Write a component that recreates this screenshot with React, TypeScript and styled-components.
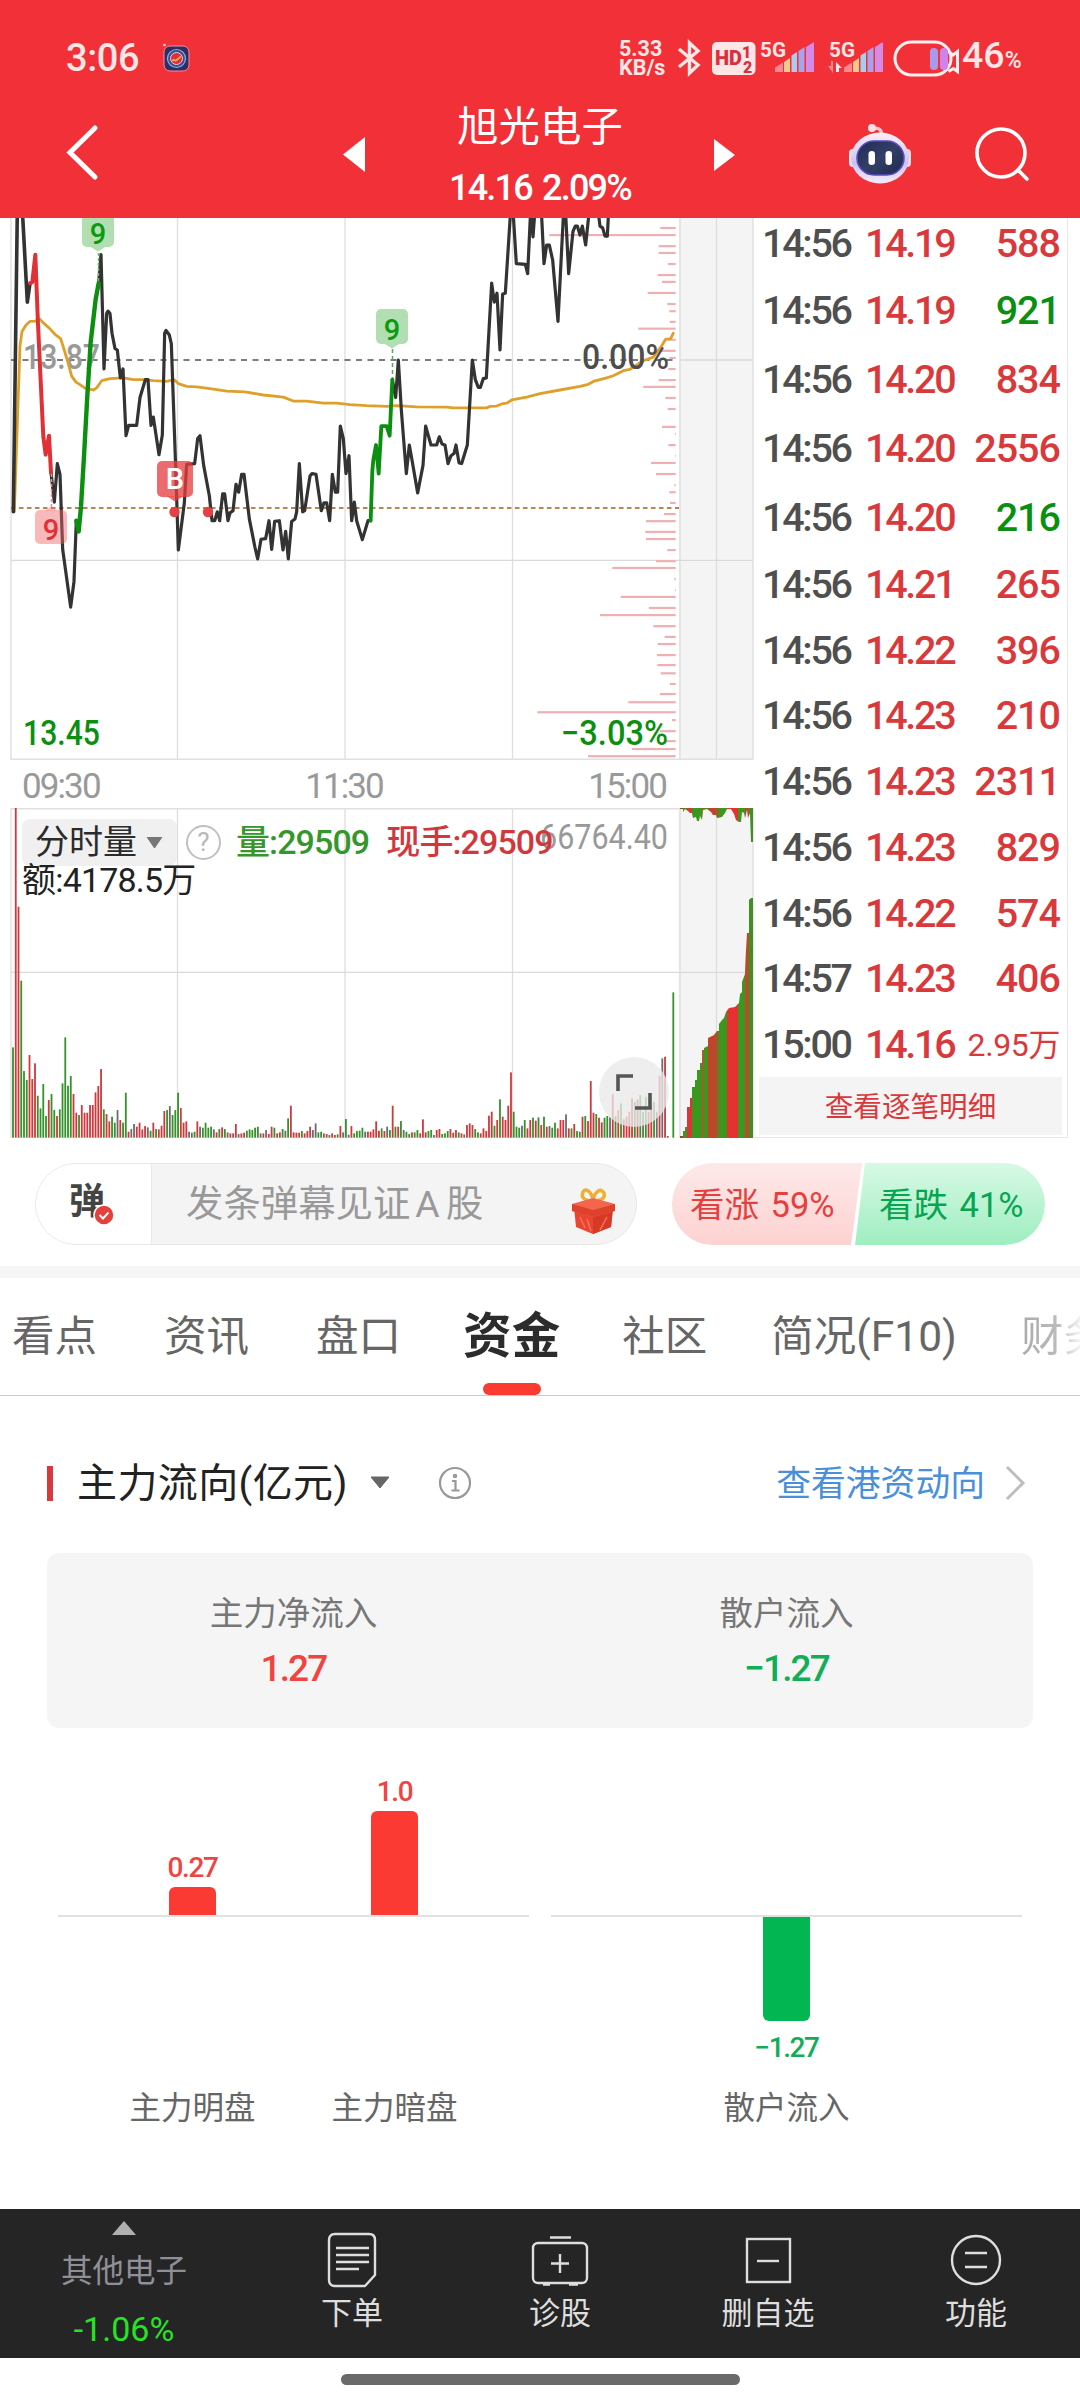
import React from 'react';
import styled, { createGlobalStyle } from 'styled-components';

const GlobalStyle = createGlobalStyle`
  * { box-sizing: border-box; }
  body {
    margin: 0;
    background: #fff;
    font-family: Roboto, "Noto Sans CJK SC", sans-serif;
    -webkit-font-smoothing: antialiased;
  }
  svg { display: block; flex: none; }
`;

const RED = '#d9393b';
const GREEN = '#0b8f10';

/* ---------- data ---------- */

type Tick = { time: string; price: string; vol: string; down?: boolean };

const TICKS: Tick[] = [
  { time: '14:56', price: '14.19', vol: '588' },
  { time: '14:56', price: '14.19', vol: '921', down: true },
  { time: '14:56', price: '14.20', vol: '834' },
  { time: '14:56', price: '14.20', vol: '2556' },
  { time: '14:56', price: '14.20', vol: '216', down: true },
  { time: '14:56', price: '14.21', vol: '265' },
  { time: '14:56', price: '14.22', vol: '396' },
  { time: '14:56', price: '14.23', vol: '210' },
  { time: '14:56', price: '14.23', vol: '2311' },
  { time: '14:56', price: '14.23', vol: '829' },
  { time: '14:56', price: '14.22', vol: '574' },
  { time: '14:57', price: '14.23', vol: '406' },
  { time: '15:00', price: '14.16', vol: '2.95万' },
];

/* Price series, in chart units: 3 per pixel across, 2.8 per pixel down. */
const PRICE_SEGMENTS: { color: string; width: number; points: string }[] = [
  { color: '#333', width: 3.6, points: '40,845 52,0 67,0 82,258 90,205' },
  {
    color: '#333', width: 3.2,
    points: '153,735 163,818 172,710 180,740 188,950 212,1112 222,1040 229,870',
  },
  {
    color: '#333', width: 3.2,
    points:
      '296,205 303,125 312,445 320,290 324,283 330,290 336,345 345,388 352,392 361,470 369,445 378,632 386,603 410,603 420,525 436,475 444,475 453,603 460,580 477,685 487,630 494,345 498,337 508,350 514,375 527,720 535,952 553,820 560,712 584,710 593,640 600,632 611,715 628,800 636,870 644,870 652,845 659,870 668,795 674,795 684,870 690,848 699,842 708,768 716,790 725,740 732,740 748,865 765,945 773,977 783,922 797,920 807,870 815,950 824,872 838,870 849,952 857,900 865,977 875,872 885,865 890,845 898,710 908,845 914,842 930,745 936,738 948,740 964,842 972,820 980,820 989,870 997,740 1006,790 1013,790 1021,605 1030,640 1038,738 1047,688 1055,870 1063,818 1070,870 1087,923 1104,870 1112,870',
  },
  {
    color: '#333', width: 3.2,
    points:
      '1177,475 1187,525 1195,420 1204,560 1219,738 1228,658 1236,700 1253,792 1269,715 1277,605 1293,658 1310,658 1318,635 1326,655 1335,658 1344,710 1353,688 1362,682 1368,658 1377,708 1385,710 1402,658 1417,420 1426,475 1435,497 1441,497 1450,472 1459,470 1475,205 1483,258 1491,233 1500,392 1508,235 1516,233 1532,0 1539,0 1549,150 1576,152 1583,178 1592,0 1595,0 1599,75 1605,0 1624,0 1632,150 1640,98 1648,98 1658,140 1674,312 1691,0 1697,10 1706,178 1719,60 1726,45 1732,45 1740,70 1747,45 1757,98 1768,0 1794,0 1800,45 1808,50 1815,73 1822,73 1826,0',
  },
  {
    color: '#e03236', width: 4,
    points: '90,205 97,202 106,125 114,320 130,635 137,685 147,632 153,735',
  },
  {
    color: '#0b8f10', width: 4.4,
    points: '229,870 236,900 243,830 252,690 262,520 272,370 287,250 296,205',
  },
  {
    color: '#0b8f10', width: 3.8,
    points: '1112,870 1117,730 1120,700 1128,658 1136,738 1144,605 1160,605 1169,632 1177,475',
  },
];

const AVERAGE =
  '43,845 52,600 60,380 66,340 78,322 90,312 105,311 120,306 130,316 147,330 165,348 182,360 192,390 205,430 215,465 228,482 240,489 257,500 280,504 290,498 305,478 330,472 370,470 400,475 430,475 460,478 500,480 522,475 535,486 560,494 590,495 630,500 680,507 735,509 790,518 850,524 880,535 920,535 970,541 1010,541 1050,545 1100,548 1160,550 1190,548 1250,551 1340,552 1360,554 1460,554 1470,550 1490,549 1505,543 1520,541 1535,532 1580,524 1620,514 1680,504 1740,494 1765,488 1780,480 1820,470 1840,464 1870,450 1890,446 1930,422 1960,412 1985,380 1997,362 2012,360 2020,345';

/* Volume by price: [y, left end] in chart units. */
const PROFILE: [number, number][] = (
  '50,961 70,628 101,956 120,956 151,984 182,953 201,966 232,923 263,982 283,988 313,989 332,895 363,985 394,960 414,988 445,985 476,956 495,910 526,976 557,983 607,966 627,1005 658,985 688,1005 708,933 739,948 770,1003 790,988 820,990 851,972 871,918 901,916 921,918 952,982 983,948 1002,817 1033,1003 1064,1005 1083,842 1114,927 1134,780 1165,940 1195,974 1215,953 1246,951 1274,952 1297,962 1327,990 1355,960 1378,865 1406,592 1428,996 1459,960 1487,975 1509,876 1529,744'
)
  .split(' ')
  .map((p) => p.split(',').map(Number) as [number, number]);

/* Minute volumes: height in thirds of a pixel, then r(ise), g(fall) or n(eutral). */
const VOLUMES = (
  '271g 993r 693r 471g 200g 173g 248r 176r 223r 126g 88g 161g 65g 113r 131g 83g 65r 85g 163g 301g 156g 185g 131r 75r 68g 98r 75r 75r 98r 98r 136r 155r 206r 85g 71r 49r 63g 45g 83n 53r 45g 135g 18r 26n 41n 33r 45r 25r 35r 31n 21g 45r 26g 25r 36r 80r 83g 95n 68g 83g 135g 89r 45r 49r 18n 15n 18g 49r 33n 30g 45g 30g 33g 25n 16r 26g 31r 26g 16n 13r 13r 41r 11n 13r 15r 21g 25g 23g 30g 33g 13n 13r 23n 11r 33r 30g 13r 16r 26g 21n 58g 96r 16r 15r 15r 20g 13r 20r 33r 23n 43n 16g 18g 13n 11r 8g 13r 8r 10g 35r 16n 56g 9n 35r 13g 20g 21g 30g 18n 18r 18r 25r 49r 21r 28g 20r 33n 23g 96r 33g 33r 50g 23n 18g 11g 16r 16g 23g 13r 55r 16r 20g 23g 8n 23r 26r 11g 13g 20g 26r 15r 23r 16g 13r 10n 38r 43r 38r 26g 16g 13r 28r 20r 66r 78r 36g 53r 115g 63r 53r 96r 196r 78g 33g 30g 36n 53g 28r 53r 60g 51r 61g 38r 63g 33r 35n 30g 45g 28r 53r 53r 70n 28r 28g 41r 20g 18g 63r 65g 50r 170r 75r 71g 60r 46r 60g 65g 61n 131r 65g 83r 103g 55r 63r 78r 118r 108g 115r 128g 78n 123g 78r 103r 108g 78n 185r 238n 243r 5r 0n 436g'
)
  .split(' ')
  .map((v) => ({ h: parseInt(v, 10) / 3, kind: v.slice(-1) }));

const VOLUME_COLORS: Record<string, string> = { r: '#d0383c', g: '#35922b', n: '#6d6a70' };

/* ---------- shared ---------- */

const Screen = styled.div`
  width: 1080px;
  height: 2400px;
  display: flex;
  flex-direction: column;
  background: #fff;
  overflow: hidden;
`;

/* ---------- header ---------- */

const Header = styled.header`
  height: 218px;
  flex: none;
  background: #f13037;
  color: #fff;
  display: flex;
  flex-direction: column;
`;

const StatusBar = styled.div`
  height: 96px;
  padding: 20px 57px 0 66px;
  display: flex;
  align-items: center;
  color: #ffe6e6;
`;

const Clock = styled.span`
  font-size: 38px;
  font-weight: 500;
  line-height: 76px;
  width: 97px;
  letter-spacing: -0.4px;
`;

const NetSpeed = styled.span`
  margin-left: auto;
  width: 58px;
  font-size: 21.5px;
  line-height: 19px;
  font-weight: 700;
  white-space: pre;
`;

const Battery = styled.span`
  display: flex;
  align-items: baseline;
  width: 61px;
  margin-left: 2px;
  font-size: 37.5px;
  line-height: 76px;
  font-weight: 500;
  white-space: nowrap;
`;

const Percent = styled.small`
  font-size: 23px;
  font-weight: 500;
`;

const StatusGap = styled.i`
  width: ${(p: { $w: number }) => p.$w}px;
`;

const NavBar = styled.div`
  flex: 1;
  display: grid;
  grid-template-columns: 343px 394px 343px;
  align-items: center;
`;

const NavSide = styled.div<{ $end?: boolean }>`
  display: flex;
  align-items: center;
  padding: ${(p) => (p.$end ? '0 49px 6px 0' : '0 0 8px 64px')};
  justify-content: ${(p) => (p.$end ? 'flex-end' : 'flex-start')};
  gap: 61px;
`;

const StockSwitch = styled.div`
  display: flex;
  align-items: center;
  justify-content: space-between;
`;

const SwitchArrow = styled.svg`
  margin-bottom: 4px;
`;

const StockTitle = styled.div`
  display: flex;
  flex-direction: column;
  align-items: center;
`;

const StockName = styled.div`
  font-size: 41.4px;
  line-height: 62px;
`;

const StockQuote = styled.div`
  font-size: 36px;
  line-height: 60px;
  font-weight: 500;
  letter-spacing: -1.8px;
  word-spacing: 3px;
`;

/* ---------- market ---------- */

const Market = styled.section`
  display: flex;
  height: 920px;
  flex: none;
`;

const ChartPane = styled.div`
  width: 754px;
  display: flex;
  flex-direction: column;
`;

const TimeAxis = styled.div`
  height: 48px;
  padding: 4px 88px 0 22px;
  display: flex;
  justify-content: space-between;
  font-size: 35px;
  line-height: 46px;
  letter-spacing: -1.9px;
  color: #999;
`;

const VolumePane = styled.div`
  position: relative;
  height: 330px;
`;

const Legend = styled.div`
  position: absolute;
  left: 22px;
  top: 11px;
  display: flex;
  flex-wrap: wrap;
  align-items: center;
  width: 640px;
`;

const StudyPicker = styled.button`
  width: 155px;
  height: 47px;
  border: 0;
  border-radius: 8px;
  background: #f0f0f0;
  padding: 0 0 0 13px;
  display: flex;
  align-items: center;
  gap: 9px;
  font: 400 34px/47px Roboto, "Noto Sans CJK SC", sans-serif;
  color: #2b2b2b;
`;

const HelpDot = styled.span`
  width: 35px;
  height: 35px;
  margin: 0 15px 0 9px;
  border: 2.5px solid #c0c0c0;
  border-radius: 50%;
  color: #b8b8b8;
  font-size: 26px;
  line-height: 31px;
  text-align: center;
`;

const LegendItem = styled.span<{ $color: string; $gap?: number }>`
  color: ${(p) => p.$color};
  margin-right: ${(p) => p.$gap ?? 0}px;
  font-size: 34px;
  line-height: 47px;
  letter-spacing: -0.9px;
  font-weight: 500;
`;

const Turnover = styled.div`
  flex-basis: 100%;
  font-size: 34px;
  line-height: 28px;
  letter-spacing: -0.8px;
  color: #222;
`;

const TickPane = styled.div`
  width: 314px;
  border-right: 1px solid #e8e8e8;
  border-bottom: 1px solid #e8e8e8;
  display: flex;
  flex-direction: column;
  padding: 0 5px 2px;
`;

const TickRow = styled.div<{ $tall?: boolean }>`
  height: ${(p) => (p.$tall ? 69 : 66)}px;
  display: grid;
  grid-template-columns: 103px 96px 1fr;
  align-items: center;
  padding: 2px 2px 0 3px;
  font-size: 39.5px;
  font-weight: 500;
  line-height: 48px;
  white-space: nowrap;

  &:first-child { height: 58px; padding-bottom: 12px; }
`;

const TickCell = styled.span<{ $color: string }>`
  color: ${(p) => p.$color};
  letter-spacing: -2.3px;
`;

const TickVolume = styled.span<{ $color: string; $small?: boolean }>`
  color: ${(p) => p.$color};
  letter-spacing: ${(p) => (p.$small ? -0.4 : -1)}px;
  font-size: ${(p) => (p.$small ? 32 : 39.5)}px;
  font-weight: ${(p) => (p.$small ? 400 : 500)};
  text-align: right;
`;

const TickMore = styled.button`
  margin-top: auto;
  height: 58px;
  border: 0;
  background: #f4f4f4;
  color: ${RED};
  font: 400 28.6px/58px Roboto, "Noto Sans CJK SC", sans-serif;
`;

/* ---------- bullet comments ---------- */

const BulletRow = styled.section`
  height: 128px;
  flex: none;
  padding: 25px 35px 0;
  display: flex;
  justify-content: space-between;
`;

const BulletInput = styled.div`
  width: 602px;
  height: 82px;
  border-radius: 41px;
  border: 1px solid #e9e9e9;
  background: #f4f4f4;
  display: flex;
  align-items: center;
  overflow: hidden;
`;

const BulletToggle = styled.div`
  width: 116px;
  height: 100%;
  border-right: 1px solid #e9e9e9;
  background: #fff;
  padding-left: 33px;
  font-size: 36px;
  line-height: 76px;
  font-weight: 700;
  color: #444;
  position: relative;
`;

const ToggleBadge = styled.svg`
  position: absolute;
  left: 57px;
  top: 40px;
`;

const BulletHint = styled.span`
  margin: 0 auto 0 34px;
  font-size: 37.4px;
  line-height: 80px;
  word-spacing: -3px;
  color: #999;
`;

const HintLatin = styled.span`
  margin-left: 5px;
`;

const GiftIcon = styled.svg`
  margin: 14px 20px 0 0;
`;

const Votes = styled.div`
  width: 373px;
  height: 82px;
  border-radius: 41px;
  overflow: hidden;
  display: flex;
`;

const Vote = styled.div<{ $up?: boolean }>`
  width: ${(p) => (p.$up ? 190 : 195)}px;
  margin-left: ${(p) => (p.$up ? 0 : -12)}px;
  flex: none;
  clip-path: ${(p) =>
    p.$up
      ? 'polygon(0 0, 100% 0, calc(100% - 11px) 100%, 0 100%)'
      : 'polygon(15px 0, 100% 0, 100% 100%, 5px 100%)'};
  background: ${(p) =>
    p.$up
      ? 'linear-gradient(#fde9e9, #fdd2d1)'
      : 'linear-gradient(#d8f9e5, #9eeec0)'};
  color: ${(p) => (p.$up ? '#e5403d' : '#07a552')};
  padding-left: ${(p) => (p.$up ? 18 : 29)}px;
  font-size: 34.5px;
  line-height: 84px;
  white-space: nowrap;
  word-spacing: 3px;
`;

const Divider = styled.div`
  height: 12px;
  flex: none;
  background: #f5f5f5;
`;

/* ---------- tabs ---------- */

const Tabs = styled.nav`
  height: 118px;
  flex: none;
  border-bottom: 1.5px solid #cbcbcb;
  padding-left: 12px;
  display: flex;
  gap: 67px;
  overflow: hidden;
  white-space: nowrap;
`;

const Tab = styled.a<{ $active?: boolean; $fade?: boolean }>`
  position: relative;
  flex: none;
  font-size: ${(p) => (p.$active ? 48.6 : 42.5)}px;
  font-weight: ${(p) => (p.$active ? 700 : 400)};
  line-height: 118px;
  margin: 0 ${(p) => (p.$active ? -5 : 0)}px;
  color: ${(p) => (p.$active ? '#2c2c2c' : '#666')};
  ${(p) =>
    p.$fade &&
    `background: linear-gradient(90deg, #aaa 0, #bbb 36px, #fff 64px);
     background-clip: text; -webkit-background-clip: text; color: transparent;`}

  &:nth-child(n + 6) { margin-left: -3px; }

  &::after {
    content: '';
    display: ${(p) => (p.$active ? 'block' : 'none')};
    position: absolute;
    left: calc(50% - 29px);
    bottom: 0;
    width: 58px;
    height: 12px;
    border-radius: 6px;
    background: #fb3b31;
  }
`;

/* ---------- capital flow ---------- */

const FlowSection = styled.section`
  flex: 1;
  display: flex;
  flex-direction: column;
  padding: 52px 47px 0;
`;

const FlowHead = styled.div`
  height: 70px;
  display: flex;
  align-items: center;
`;

const FlowMark = styled.i`
  width: 6px;
  height: 35px;
  background: #d9393b;
  margin-right: 24px;
`;

const FlowTitle = styled.h2`
  margin: 0 21px 0 0;
  font-size: 40px;
  font-weight: 400;
  line-height: 70px;
  letter-spacing: 0.4px;
  padding-top: 1px;
  color: #222;
`;

const FlowLink = styled.a`
  margin-left: auto;
  margin-right: 20px;
  padding-top: 1px;
  font-size: 34.8px;
  line-height: 70px;
  color: #4a8fd9;
`;

const SummaryCard = styled.div`
  margin-top: 35px;
  height: 175px;
  border-radius: 12px;
  background: #f5f5f5;
  display: grid;
  grid-template-columns: 1fr 1fr;
  padding: 36px 0 0;
`;

const SummaryItem = styled.div`
  display: flex;
  flex-direction: column;
  align-items: center;
`;

const SummaryLabel = styled.span`
  font-size: 33.5px;
  line-height: 50px;
  color: #777;
`;

const FlowValue = styled.span<{ $down?: boolean; $size: number; $line: number }>`
  font-size: ${(p) => p.$size}px;
  line-height: ${(p) => p.$line}px;
  font-weight: 500;
  letter-spacing: -0.05em;
  color: ${(p) => (p.$down ? '#12ae57' : '#ef443f')};
`;

const FlowCharts = styled.div`
  margin: 34px 11px 0;
  display: grid;
  grid-template-columns: 471px 471px;
  justify-content: space-between;
`;

const FlowChart = styled.div`
  display: flex;
  justify-content: center;
  gap: 2px;
  height: 380px;
  background: linear-gradient(#e0e2e2, #e0e2e2) 0 153px / 100% 2px no-repeat;
`;

const FlowColumn = styled.div`
  width: 200px;
  display: grid;
  grid-template-rows: 153px 2px 147px 1fr;
  justify-items: center;
`;

const BarArea = styled.div<{ $below?: boolean }>`
  grid-row: ${(p) => (p.$below ? 3 : 1)};
  display: flex;
  flex-direction: ${(p) => (p.$below ? 'column-reverse' : 'column')};
  justify-content: flex-end;
  align-items: center;
`;

const Bar = styled.div<{ $down?: boolean }>`
  width: 47px;
  flex: none;
  border-radius: ${(p) => (p.$down ? '0 0 6px 6px' : '6px 6px 0 0')};
  background: ${(p) => (p.$down ? '#02b752' : '#fb3b33')};
`;

const ColumnLabel = styled.span`
  grid-row: 4;
  font-size: 31.5px;
  line-height: 90px;
  color: #666;
`;

/* ---------- bottom bar ---------- */

const ActionBar = styled.footer`
  height: 149px;
  flex: none;
  background: #252525;
  display: grid;
  grid-template-columns: 248px repeat(4, 208px);
`;

const SectorCell = styled.div`
  display: flex;
  flex-direction: column;
  align-items: center;
  padding-top: 12px;
`;

const SectorName = styled.span`
  margin-top: 12px;
  font-size: 31.5px;
  line-height: 50px;
  color: #8f8f98;
`;

const SectorChange = styled.span`
  margin-top: 7px;
  font-size: 34px;
  line-height: 50px;
  font-weight: 400;
  color: #26e327;
`;

const Action = styled.button`
  border: 0;
  background: none;
  padding: 21px 0 0;
  display: flex;
  flex-direction: column;
  align-items: center;
  font: 400 31px/46px Roboto, "Noto Sans CJK SC", sans-serif;
  color: #dedede;
  gap: 1px;
`;

const HomeArea = styled.div`
  height: 42px;
  flex: none;
  display: flex;
  justify-content: center;
  padding-top: 16px;
`;

const HomeIndicator = styled.i`
  width: 399px;
  height: 11px;
  border-radius: 6px;
  background: #6a6a6a;
`;

/* ---------- drawings ---------- */

function Signal({ traffic }: { traffic?: boolean }) {
  const colors = ['#ff8790', '#f5c98e', '#a8cdf0', '#a7a4ec', '#d58ae8'];
  return (
    <svg width="57" height="36" viewBox="0 0 57 36">
      <text x="1" y="17" fontSize="20.5" fontWeight="700" fill="#ffe6e6" textLength="26" lengthAdjust="spacingAndGlyphs">
        5G
      </text>
      {traffic && (
        <g fill="#ffe6e6">
          <path d="M3 21v5h-3l5 7v-12z" opacity=".5" />
          <path d="M8 32v-10l6 6h-3v4z" />
        </g>
      )}
      <path d="M16 32v-4.5l8-5V32z" fill={colors[0]} />
      <path d="M25 32V22l6-4v14z" fill={colors[1]} />
      <path d="M32.5 32V15.5l5.5-3.5v20z" fill={colors[2]} />
      <path d="M39.5 32V11l6-4v25z" fill={colors[3]} />
      <path d="M47 32V7l8-5v30z" fill={colors[4]} />
    </svg>
  );
}

function StatusIcons() {
  return (
    <>
      <svg width="25" height="38" viewBox="0 0 25 38" fill="none" stroke="#ffe6e6" strokeWidth="3.4">
        <path d="M2 10 21 26 12.5 34V4L21 12 2 28" strokeLinejoin="miter" />
      </svg>
      <svg width="57" height="38" viewBox="0 0 57 38">
        <rect x="10" y="3" width="43.5" height="33" rx="5" fill="#ffe6e6" />
        <text x="13" y="26" fontSize="20" fontWeight="900" fill="#d93040" textLength="27" lengthAdjust="spacingAndGlyphs">HD</text>
        <text x="40" y="19" fontSize="16" fontWeight="900" fill="#d93040">1</text>
        <text x="41" y="34" fontSize="16" fontWeight="900" fill="#d93040">2</text>
      </svg>
    </>
  );
}

function BatteryIcon() {
  return (
    <svg width="67" height="38" viewBox="0 0 67 38" fill="none">
      <rect x="2" y="3" width="56" height="33" rx="16.5" stroke="#fff0f0" strokeWidth="3" />
      <rect x="37" y="9" width="8" height="22" rx="4" fill="#a99bec" />
      <rect x="47" y="9" width="8" height="22" rx="4" fill="#cf83ea" />
      <path d="M56 13l4 3 4.500-3.500v20l-4-3-5 3" stroke="#fff0f0" strokeWidth="3" />
    </svg>
  );
}

function AppBadge() {
  return (
    <svg width="28" height="30" viewBox="0 0 28 30">
      <rect x="1" y="3" width="25" height="25" rx="6" fill="#332c60" stroke="#ec8fa5" strokeWidth="1" />
      <circle cx="13.5" cy="15.5" r="9" fill="#344c94" stroke="#8faee5" strokeWidth="1.2" />
      <circle cx="13.5" cy="15.5" r="6" fill="#d92f3e" stroke="#f4ccd6" strokeWidth="1" />
      <path d="M9 17l4 .5 5-4" stroke="#f4a740" strokeWidth="2" fill="none" />
      <circle cx="1.5" cy="2" r="1.3" fill="#ffd9dc" />
    </svg>
  );
}

function RobotIcon() {
  return (
    <svg width="64" height="62" viewBox="0 0 64 62">
      <defs>
        <linearGradient id="shell" x1="0" y1="0" x2="0" y2="1">
          <stop offset="0" stopColor="#fdeef6" />
          <stop offset=".6" stopColor="#c9c4f3" />
          <stop offset="1" stopColor="#f8eafa" />
        </linearGradient>
        <linearGradient id="visor" x1="0" y1="0" x2="1" y2="1">
          <stop offset="0" stopColor="#202b55" />
          <stop offset=".5" stopColor="#333f66" />
          <stop offset="1" stopColor="#1d2850" />
        </linearGradient>
      </defs>
      <path d="M24 5.5c6-1 9 0 10 6" stroke="#ffc6cd" strokeWidth="3.4" fill="none" />
      <circle cx="24" cy="5" r="4" fill="#ffe0e3" />
      <rect x="1" y="26" width="8" height="18" rx="4" fill="#ffe3ec" />
      <rect x="55" y="26" width="8" height="18" rx="4" fill="#ffd3e2" />
      <ellipse cx="32" cy="35" rx="29" ry="25.5" fill="url(#shell)" />
      <rect x="9" y="18" width="47" height="34" rx="17" fill="url(#visor)" stroke="#5b4bc4" strokeWidth="1.5" />
      <rect x="20.5" y="28" width="6.5" height="14" rx="3.2" fill="#fff" />
      <rect x="37.5" y="28" width="6.5" height="14" rx="3.2" fill="#fff" />
    </svg>
  );
}

function Gift() {
  return (
    <GiftIcon width="45" height="48" viewBox="0 0 45 48">
      <path d="M22 14C16 14 9 12 12 5c3-5 9 0 10 9 1-9 8-14 11-8 2 6-5 8-11 8z" fill="none" stroke="#f0ae35" strokeWidth="3.5" />
      <path d="M3 20h39l-2 20-18 7-17-7z" fill="#e9452f" />
      <path d="M22 25v22l18-7 2-18z" fill="#d63a26" />
      <path d="M1 17l21-6 22 6v7l-22 6-21-6z" fill="#f2674c" />
      <path d="M1 17l21 6 22-6v7l-22 6-21-6z" fill="#de422d" />
      <path d="M9 30l5 11M16 32l4 12M36 30l-7 13" stroke="#f2745c" strokeWidth="1.5" />
    </GiftIcon>
  );
}

type FlagProps = {
  cx: number;
  top: number;
  w: number;
  h: number;
  fill: string;
  ink: string;
  baseline: number;
  up?: boolean;
  label: string;
};

function Flag({ cx, top, w, h, fill, ink, baseline, up, label }: FlagProps) {
  const tip = up
    ? `M${cx - 6} ${top + 0.5}l6-4 6 4z`
    : `M${cx - 8} ${top + h - 0.5}l8 5 8-5z`;
  return (
    <g>
      <path d={tip} fill={fill} />
      <rect x={cx - w / 2} y={top} width={w} height={h} rx="5" fill={fill} />
      <text x={cx} y={baseline} fontSize="29" fontWeight="500" fill={ink} textAnchor="middle">
        {label}
      </text>
    </g>
  );
}

const GRID_X = [11, 177.5, 345, 512.5, 680, 716.5, 753];

function PriceChart() {
  return (
    <svg width="754" height="542" viewBox="0 218 754 542">
      <rect x="679" y="218" width="74" height="542" fill="#f4f4f4" />
      {GRID_X.map((x) => (
        <line key={x} x1={x} x2={x} y1="218" y2="760" stroke="#dedede" strokeWidth="1.3" />
      ))}
      <line x1="11" x2="753" y1="560.4" y2="560.4" stroke="#dadada" strokeWidth="1.3" />
      <line x1="11" x2="753" y1="759.3" y2="759.3" stroke="#e0e0e0" strokeWidth="1.5" />
      <line x1="680" x2="753" y1="360" y2="360" stroke="#dadada" strokeWidth="1.3" />
      <line x1="11" x2="676" y1="360" y2="360" stroke="#7c7c7c" strokeWidth="1.8" strokeDasharray="6 5.5" />
      <line x1="11" x2="679" y1="508" y2="508" stroke="#b8834f" strokeWidth="1.9" strokeDasharray="4.5 3.5" />
      {PROFILE.map(([y, left]) => (
        <rect key={y} x={340 + left / 3} width={(1007 - left) / 3} y={210 + y / 2.8 - 1} height="2.2" fill="#eeb0b2" />
      ))}
      <text x="23" y="369" fontSize="35" fontWeight="500" fill="#999" textLength="77" lengthAdjust="spacingAndGlyphs">13.87</text>
      <g transform="translate(0 210) scale(.33333 .35714)" fill="none" strokeLinejoin="round" strokeLinecap="round">
        <polyline points={AVERAGE} stroke="#dfa02a" strokeWidth="2.8" vectorEffect="non-scaling-stroke" />
        {PRICE_SEGMENTS.map((s) => (
          <polyline key={s.points} points={s.points} stroke={s.color} strokeWidth={s.width} vectorEffect="non-scaling-stroke" />
        ))}
      </g>
      <text x="582" y="369" fontSize="35" fontWeight="500" fill="#4d4d4d" textLength="87" lengthAdjust="spacingAndGlyphs">0.00%</text>
      <text x="23" y="745" fontSize="35" fontWeight="500" fill={GREEN} textLength="77" lengthAdjust="spacingAndGlyphs">13.45</text>
      <text x="561" y="745" fontSize="35" fontWeight="500" fill={GREEN} textLength="107" lengthAdjust="spacingAndGlyphs">−3.03%</text>
      <line x1="98.5" x2="98.5" y1="253" y2="282" stroke="#69b869" strokeWidth="1.5" strokeDasharray="3 2" />
      <line x1="392.5" x2="392.5" y1="349" y2="378" stroke="#55a855" strokeWidth="1.5" strokeDasharray="4 3" />
      <line x1="51.5" x2="51.5" y1="474" y2="507" stroke="#ec8f92" strokeWidth="1.5" strokeDasharray="3 2" />
      <Flag cx={98} top={213} w={32} h={34} fill="#b2dfb2" ink="#0b9a10" baseline={244} label="9" />
      <Flag cx={392} top={309} w={32} h={35} fill="#b2dfb2" ink="#0b9a10" baseline={340} label="9" />
      <Flag cx={51} top={510} w={32} h={34} fill="rgba(240,100,105,.45)" ink="#e03236" baseline={540} up label="9" />
      <Flag cx={175} top={461} w={36} h={36} fill="rgba(230,60,62,.76)" ink="#fff" baseline={489} label="B" />
      <circle cx="174.5" cy="512" r="5.2" fill="#e64043" />
      <circle cx="208" cy="512" r="5.2" fill="#e64043" />
    </svg>
  );
}

/* Call-auction silhouettes, clipped over coloured stripes. */
const AUCTION_BODY =
  '680,1138 680,1136 683,1136 683,1131 685,1131 685,1127 687,1127 687,1107 690,1107 690,1098 692,1098 692,1087 695,1087 695,1080 697,1080 697,1070 700,1070 700,1063 702,1063 702,1050 704,1050 704,1048 708,1046 708,1038 714,1035 717,1031 719,1031 719,1024 722,1020 724,1018 726,1012 729,1008 735,1007 739,1003 740,994 742,992 742,982 745,974 746,950 747,933 749,933 749,900 751,898 753,898 753,1138';
const AUCTION_TOP =
  '680,807 680,809 683,809 683,812 685,809 688,811 690,813 692,813 693,818 696,817 697,821 699,821 700,816 702,820 703,810 707,809 711,812 713,815 716,815 717,818 722,817 725,813 727,809 731,809 734,814 736,820 739,822 741,822 742,812 744,813 745,818 747,810 748,818 750,813 751,842 753,842 753,807';
const STRIPES: [number, number, string][] = [
  [680, 683, '#a3452a'], [683, 687, '#3f9423'], [687, 692, '#dc3535'], [692, 702, '#3b981f'],
  [702, 704, '#a65c2b'], [704, 708, '#3b981f'], [708, 716, '#c0462b'], [716, 719, '#8b6426'],
  [719, 727, '#3b981f'], [727, 738, '#e73131'], [738, 745, '#3b981f'], [745, 749, '#b94a2b'], [749, 753, '#3f8f22'],
];

function VolumeChart() {
  const step = 660.3 / (VOLUMES.length - 1);
  return (
    <svg width="754" height="330" viewBox="0 808 754 330">
      <defs>
        <clipPath id="auction">
          <polygon points={AUCTION_BODY} />
          <polygon points={AUCTION_TOP} />
        </clipPath>
      </defs>
      <rect x="678.5" y="808" width="74.5" height="330" fill="#f4f4f4" />
      {GRID_X.map((x) => (
        <line key={x} x1={x} x2={x} y1="808" y2="1138" stroke="#dedede" strokeWidth="1.3" />
      ))}
      <line x1="11" x2="753" y1="808.7" y2="808.7" stroke="#e0e0e0" strokeWidth="1.5" />
      <line x1="11" x2="753" y1="972.4" y2="972.4" stroke="#dadada" strokeWidth="1.3" />
      {VOLUMES.map((v, i) => (
        <rect key={i} x={12.1 + i * step} y={1137.7 - v.h} width="1.8" height={v.h} fill={VOLUME_COLORS[v.kind]} />
      ))}
      <g clipPath="url(#auction)">
        {STRIPES.map(([a, b, color]) => (
          <rect key={a} x={a} width={b - a + 0.3} y="807" height="332" fill={color} />
        ))}
      </g>
      <text x="540" y="849" fontSize="35" fontWeight="400" fill="#999" textLength="128" lengthAdjust="spacingAndGlyphs">66764.40</text>
      <circle cx="634" cy="1092" r="35" fill="#e9e9e9" fillOpacity=".78" />
      <path d="M618 1091v-15h15M635 1108h15v-15" fill="none" stroke="#555" strokeWidth="3.6" />
    </svg>
  );
}

const ICON = { width: 60, height: 60, viewBox: '0 0 60 60', fill: 'none', stroke: '#dedede', strokeWidth: 2.4 };

const ACTIONS = [
  {
    label: '下单',
    icon: (
      <svg {...ICON}>
        <path d="M13 4h34q6 0 6 6v35L43 56H13q-6 0-6-6V10q0-6 6-6z" strokeLinejoin="round" />
        <path d="M14 18h33M14 25h33M14 32h33M14 39h23" />
      </svg>
    ),
  },
  {
    label: '诊股',
    icon: (
      <svg {...ICON}>
        <rect x="3" y="13" width="54" height="40" rx="5" />
        <path d="M20 7.5h21M30 24v19M21 33.5h18M13 54.5h7M39 54.5h9" />
      </svg>
    ),
  },
  {
    label: '删自选',
    icon: (
      <svg {...ICON}>
        <rect x="9" y="9" width="43" height="43" />
        <path d="M19 31h22" />
      </svg>
    ),
  },
  {
    label: '功能',
    icon: (
      <svg {...ICON}>
        <circle cx="30" cy="30" r="24" />
        <path d="M19 23h22M19 37h22" />
      </svg>
    ),
  },
];

/* ---------- page ---------- */

export default function App() {
  return (
    <Screen>
      <GlobalStyle />
      <Header>
        <StatusBar>
          <Clock>3:06</Clock>
          <AppBadge />
          <NetSpeed>{'5.33\nKB/s'}</NetSpeed>
          <StatusIcons />
          <Signal />
          <StatusGap $w={12} />
          <Signal traffic />
          <StatusGap $w={8} />
          <BatteryIcon />
          <Battery>
            46<Percent>%</Percent>
          </Battery>
        </StatusBar>
        <NavBar>
          <NavSide>
            <svg width="40" height="60" viewBox="0 0 40 60" fill="none" stroke="#fff" strokeWidth="5" strokeLinecap="round">
              <path d="M31 5 6 29.5 31 54" />
            </svg>
          </NavSide>
          <StockSwitch>
            <SwitchArrow width="23" height="36" viewBox="0 0 23 36">
              <path d="M22 0v35L0 17.5z" fill="#fff" />
            </SwitchArrow>
            <StockTitle>
              <StockName>旭光电子</StockName>
              <StockQuote>14.16 2.09%</StockQuote>
            </StockTitle>
            <SwitchArrow width="23" height="36" viewBox="0 0 23 36">
              <path d="M0 2v32l21-16z" fill="#fff" />
            </SwitchArrow>
          </StockSwitch>
          <NavSide $end>
            <RobotIcon />
            <svg width="58" height="58" viewBox="0 0 58 58" fill="none" stroke="#fff" strokeWidth="3.6" strokeLinecap="round">
              <circle cx="28" cy="28" r="24" />
              <path d="M45 45l9 9" />
            </svg>
          </NavSide>
        </NavBar>
      </Header>

      <Market>
        <ChartPane>
          <PriceChart />
          <TimeAxis>
            <span>09:30</span>
            <span>11:30</span>
            <span>15:00</span>
          </TimeAxis>
          <VolumePane>
            <VolumeChart />
            <Legend>
              <StudyPicker>
                分时量
                <svg width="17" height="12" viewBox="0 0 17 12">
                  <path d="M1 0h15L8.5 11z" fill="#777" stroke="#777" strokeLinejoin="round" />
                </svg>
              </StudyPicker>
              <HelpDot>?</HelpDot>
              <LegendItem $color="#35962b" $gap={17}>量:29509</LegendItem>
              <LegendItem $color="#d0383c">现手:29509</LegendItem>
              <Turnover>额:4178.5万</Turnover>
            </Legend>
          </VolumePane>
        </ChartPane>
        <TickPane>
          {TICKS.map((t, i) => (
            <TickRow key={i} $tall={i < 5}>
              <TickCell $color="#4f4f4f">{t.time}</TickCell>
              <TickCell $color={RED}>{t.price}</TickCell>
              <TickVolume $color={t.down ? GREEN : RED} $small={t.vol.includes('万')}>
                {t.vol}
              </TickVolume>
            </TickRow>
          ))}
          <TickMore>查看逐笔明细</TickMore>
        </TickPane>
      </Market>

      <BulletRow>
        <BulletInput>
          <BulletToggle>
            弹
            <ToggleBadge width="22" height="22" viewBox="0 0 22 22">
              <circle cx="11" cy="11" r="10" fill="#e5403b" stroke="#fff" strokeWidth="1.5" />
              <path d="M6.5 11l3.5 3.5 5.5-6" fill="none" stroke="#fff" strokeWidth="2" />
            </ToggleBadge>
          </BulletToggle>
          <BulletHint>
            发条弹幕见证<HintLatin>A 股</HintLatin>
          </BulletHint>
          <Gift />
        </BulletInput>
        <Votes>
          <Vote $up>看涨 59%</Vote>
          <Vote>看跌 41%</Vote>
        </Votes>
      </BulletRow>
      <Divider />

      <Tabs>
        <Tab>看点</Tab>
        <Tab>资讯</Tab>
        <Tab>盘口</Tab>
        <Tab $active>资金</Tab>
        <Tab>社区</Tab>
        <Tab>简况(F10)</Tab>
        <Tab $fade>财务</Tab>
      </Tabs>

      <FlowSection>
        <FlowHead>
          <FlowMark />
          <FlowTitle>主力流向(亿元)</FlowTitle>
          <svg width="22" height="14" viewBox="0 0 22 14">
            <path d="M2 1h18l-9 11z" fill="#666" stroke="#666" strokeLinejoin="round" />
          </svg>
          <svg width="100" height="36" viewBox="0 0 100 36" fill="none" stroke="#999" strokeWidth="2.2">
            <circle cx="64" cy="18" r="15" />
            <path d="M61 16h3.5v9M60.500 25.5h8" />
            <circle cx="64" cy="11" r="1.2" fill="#999" />
          </svg>
          <FlowLink>查看港资动向</FlowLink>
          <svg width="28" height="36" viewBox="0 0 28 36" fill="none" stroke="#bdbdbd" strokeWidth="3">
            <path d="M2 2l16 16L2 34" />
          </svg>
        </FlowHead>
        <SummaryCard>
          <SummaryItem>
            <SummaryLabel>主力净流入</SummaryLabel>
            <FlowValue $size={37} $line={60}>1.27</FlowValue>
          </SummaryItem>
          <SummaryItem>
            <SummaryLabel>散户流入</SummaryLabel>
            <FlowValue $down $size={37} $line={60}>−1.27</FlowValue>
          </SummaryItem>
        </SummaryCard>
        <FlowCharts>
          <FlowChart>
            <FlowColumn>
              <BarArea>
                <FlowValue $size={28} $line={39}>0.27</FlowValue>
                <Bar style={{ height: 28 }} />
              </BarArea>
              <ColumnLabel>主力明盘</ColumnLabel>
            </FlowColumn>
            <FlowColumn>
              <BarArea>
                <FlowValue $size={28} $line={39}>1.0</FlowValue>
                <Bar style={{ height: 104 }} />
              </BarArea>
              <ColumnLabel>主力暗盘</ColumnLabel>
            </FlowColumn>
          </FlowChart>
          <FlowChart>
            <FlowColumn>
              <BarArea $below>
                <FlowValue $down $size={28} $line={54}>−1.27</FlowValue>
                <Bar $down style={{ height: 104 }} />
              </BarArea>
              <ColumnLabel>散户流入</ColumnLabel>
            </FlowColumn>
          </FlowChart>
        </FlowCharts>
      </FlowSection>

      <ActionBar>
        <SectorCell>
          <svg width="24" height="14" viewBox="0 0 24 14">
            <path d="M12 0l12 14H0z" fill="#b0b0b0" />
          </svg>
          <SectorName>其他电子</SectorName>
          <SectorChange>-1.06%</SectorChange>
        </SectorCell>
        {ACTIONS.map((a) => (
          <Action key={a.label}>
            {a.icon}
            {a.label}
          </Action>
        ))}
      </ActionBar>
      <HomeArea>
        <HomeIndicator />
      </HomeArea>
    </Screen>
  );
}
